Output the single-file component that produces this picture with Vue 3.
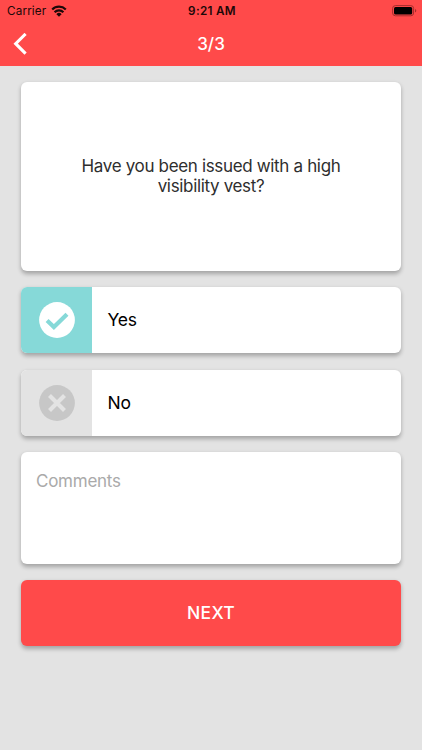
<script setup>
import { ref } from 'vue'

const answer = ref('yes')
const comments = ref('')
</script>

<template>
  <div class="screen">
    <header class="header">
      <div class="status">
        <div class="carrier">
          <span>Carrier</span>
          <svg class="wifi" viewBox="0 0 16 12" width="16" height="12">
            <g fill="none" stroke="#1c0808" stroke-width="2.2">
              <path d="M1.2 4.5a9.7 9.7 0 0 1 13.6 0" />
              <path d="M3.6 7.3a6.2 6.2 0 0 1 8.8 0" />
            </g>
            <path d="M8 11.8 5.4 9.2a3.6 3.6 0 0 1 5.2 0z" fill="#1c0808" />
          </svg>
        </div>
        <span class="time">9:21 AM</span>
        <svg class="battery" viewBox="0 0 25 12" width="25" height="12">
          <rect x=".6" y=".6" width="21" height="10.2" rx="2.8" fill="none" stroke="#a42d2d" stroke-width="1" />
          <rect x="2" y="2" width="18.2" height="7.4" rx="1.5" fill="#000" />
          <path d="M23 4v3.5q1.3-.5 1.3-1.75T23 4z" fill="#a42d2d" />
        </svg>
      </div>
      <nav class="nav">
        <button class="back" aria-label="Back">
          <svg viewBox="0 0 14 22" width="14" height="22">
            <path d="M11.5 2 2.7 10.7l8.8 8.8" fill="none" stroke="#fff" stroke-width="3.1" stroke-linecap="square" stroke-linejoin="miter" />
          </svg>
        </button>
        <h1 class="title">3/3</h1>
      </nav>
    </header>

    <main class="content">
      <section class="card question">
        <p>Have you been issued with a high<br />visibility vest?</p>
      </section>

      <button class="card option" :class="{ selected: answer === 'yes' }" @click="answer = 'yes'">
        <span class="mark">
          <svg viewBox="0 0 36 36" width="36" height="36">
            <circle class="disc" cx="18" cy="18" r="17.9" />
            <path class="glyph" d="m8.1 18.4 6.8 6.7L28 12.2" />
          </svg>
        </span>
        <span class="label">Yes</span>
      </button>

      <button class="card option" :class="{ selected: answer === 'no' }" @click="answer = 'no'">
        <span class="mark">
          <svg viewBox="0 0 36 36" width="36" height="36">
            <circle class="disc" cx="18" cy="18" r="17.9" />
            <path class="glyph" d="m10.5 10.5 15 15m0-15-15 15" />
          </svg>
        </span>
        <span class="label">No</span>
      </button>

      <textarea v-model="comments" class="card comments" placeholder="Comments"></textarea>

      <button class="card next">NEXT</button>
    </main>
  </div>
</template>

<style>
body {
  margin: 0;
  background: #e3e3e3;
}
</style>

<style scoped>
.screen {
  display: flex;
  flex-direction: column;
  height: 750px;
  overflow: hidden;
  background: #e3e3e3;
  font-family: Inter, "Liberation Sans", sans-serif;
}

button {
  padding: 0;
  border: 0;
  background: none;
  font: inherit;
  color: inherit;
}

.header {
  box-sizing: border-box;
  height: 65.5px;
  flex: none;
  background: #ff4a4a;
}

.status {
  display: grid;
  grid-template-columns: 1fr auto 1fr;
  align-items: center;
  height: 22px;
  padding: 0 5px 0 7px;
  font-size: 11.7px;
  color: #1c0808;
}

.carrier {
  display: flex;
  align-items: center;
  gap: 4.5px;
  letter-spacing: 0.15px;
}

.wifi {
  margin-top: -1px;
}

.time {
  font-weight: 600;
  letter-spacing: 0.3px;
}

.battery {
  justify-self: end;
  margin-top: -1px;
}

.nav {
  display: grid;
  grid-template-columns: 1fr auto 1fr;
  align-items: center;
  height: 43px;
  padding: 0 12.5px;
}

.back {
  display: flex;
}

.title {
  margin: 0;
  font-size: 17px;
  font-weight: 500;
  color: #fff;
}

.content {
  display: flex;
  flex-direction: column;
  gap: 16.4px;
  padding: 16.3px 20.7px;
}

.card {
  box-sizing: border-box;
  width: 100%;
  border-radius: 6px;
  background: #fff;
  box-shadow: 0 2.5px 4px rgba(0, 0, 0, 0.28);
}

.question {
  display: flex;
  align-items: center;
  justify-content: center;
  height: 189px;
  text-align: center;
}

.question p {
  margin: 0;
  font-size: 17px;
  line-height: 20px;
  letter-spacing: -0.34px;
  color: #2e2e2e;
}

.option {
  display: flex;
  align-items: center;
  height: 66px;
  overflow: hidden;
}

.mark {
  display: flex;
  align-items: center;
  justify-content: center;
  box-sizing: border-box;
  width: 71.5px;
  height: 100%;
  padding-left: 1px;
  background: #e3e3e3;
}

.disc {
  fill: #c7c7c7;
}

.glyph {
  fill: none;
  stroke: #e3e3e3;
  stroke-width: 4.2;
}

.selected .mark {
  background: #86d9d8;
}

.selected .disc {
  fill: #fff;
}

.selected .glyph {
  stroke: #86d9d8;
}

.label {
  padding: 0 0 1px 15.3px;
  font-size: 17.5px;
  letter-spacing: -0.25px;
  color: #000;
}

.comments {
  display: block;
  height: 112px;
  margin: 0;
  padding: 18px 15.3px;
  border: 0;
  outline: 0;
  resize: none;
  font: 17px/22px Inter, "Liberation Sans", sans-serif;
  letter-spacing: -0.25px;
}

.comments::placeholder {
  color: #aaa;
  opacity: 1;
}

.next {
  height: 66px;
  padding-bottom: 2px;
  background: #ff4a4a;
  font-size: 17.5px;
  font-weight: 500;
  letter-spacing: 0.3px;
  color: #fff;
}
</style>
